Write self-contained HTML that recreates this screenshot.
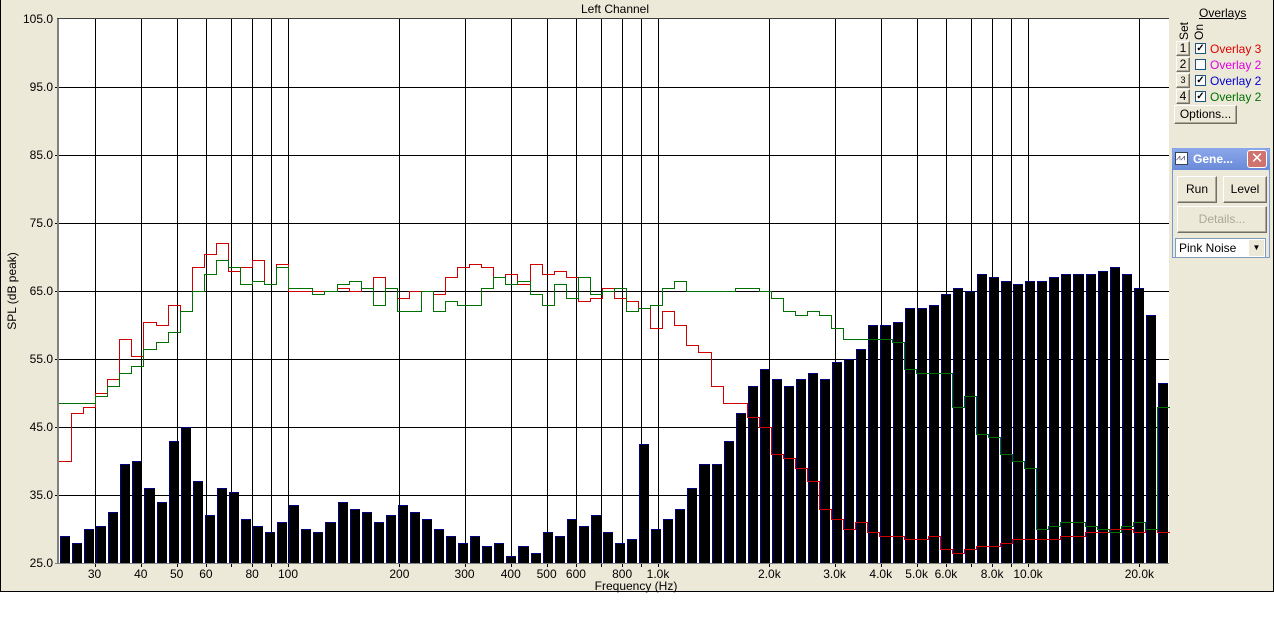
<!DOCTYPE html>
<html><head><meta charset="utf-8"><style>
body{margin:0;width:1274px;height:637px;background:#fff;overflow:hidden;font-family:"Liberation Sans",sans-serif;font-size:12px;position:relative}
#win{position:absolute;left:0;top:0;width:1272px;height:591px;background:#ece9d8;border-right:1px solid #000;border-bottom:1px solid #000;border-left:1px solid #000}
.a{position:absolute;white-space:nowrap}
.btn{position:absolute;background:#ece9d8;border:1px solid;border-color:#fff #716f64 #716f64 #fff;box-shadow:inset -1px -1px 0 #aca899;text-align:center;box-sizing:border-box}
.cb{position:absolute;width:11px;height:11px;background:#fff;border:1px solid #1c5180;box-sizing:border-box;font-size:10px;line-height:9px;text-align:center;font-weight:bold}
</style></head><body>
<div id="win"></div>
<svg id="s" width="1274" height="637" style="position:absolute;left:0;top:0" font-family="Liberation Sans, sans-serif" font-size="12"></svg>
<div class="a" style="left:1199px;top:6px;text-decoration:underline">Overlays</div>
<div class="a" style="left:1177px;top:40px;transform:rotate(-90deg);transform-origin:0 0">Set</div>
<div class="a" style="left:1192px;top:40px;transform:rotate(-90deg);transform-origin:0 0">On</div>
<div class="btn" style="left:1176px;top:41px;width:14px;height:15px;line-height:13px">1</div>
<div class="btn" style="left:1176px;top:57px;width:14px;height:15px;line-height:13px">2</div>
<div class="btn" style="left:1176px;top:73px;width:14px;height:15px;line-height:13px;font-size:9px">3</div>
<div class="btn" style="left:1176px;top:89px;width:14px;height:15px;line-height:13px">4</div>
<div class="cb" style="left:1195px;top:43px">✓</div>
<div class="cb" style="left:1195px;top:59px"></div>
<div class="cb" style="left:1195px;top:75px">✓</div>
<div class="cb" style="left:1195px;top:91px">✓</div>
<div class="a" style="left:1210px;top:42px;color:#e00000">Overlay 3</div>
<div class="a" style="left:1210px;top:58px;color:#e000e0">Overlay 2</div>
<div class="a" style="left:1210px;top:74px;color:#0000d0">Overlay 2</div>
<div class="a" style="left:1210px;top:90px;color:#007000">Overlay 2</div>
<div class="btn" style="left:1174px;top:105px;width:63px;height:19px;line-height:17px">Options...</div>
<div style="position:absolute;left:1172px;top:148px;width:98px;height:110px;background:#ece9d8;border:1px solid #7a96df;box-sizing:border-box"></div>
<div style="position:absolute;left:1172px;top:148px;width:98px;height:22px;background:linear-gradient(#8ca8ec,#6a8ad8);border-radius:5px 5px 0 0"></div>
<div style="position:absolute;left:1175px;top:152px;width:13px;height:13px;background:#fff;border:1px solid #345;box-sizing:border-box;font-size:8px;line-height:10px;color:#225">⩘⩘</div>
<div class="a" style="left:1193px;top:152px;color:#fff;font-weight:bold;font-size:12px">Gene...</div>
<div style="position:absolute;left:1247px;top:150px;width:20px;height:18px;background:#d0726e;border:1px solid #fff;box-sizing:border-box;color:#fff;font-size:15px;line-height:15px;text-align:center;border-radius:3px">✕</div>
<div class="btn" style="left:1177px;top:176px;width:40px;height:27px;line-height:25px;font-size:12px">Run</div>
<div class="btn" style="left:1223px;top:176px;width:44px;height:27px;line-height:25px;font-size:12px">Level</div>
<div class="btn" style="left:1177px;top:206px;width:90px;height:27px;line-height:25px;font-size:12px;color:#aca899">Details...</div>
<div style="position:absolute;left:1175px;top:238px;width:91px;height:20px;background:#fff;border:1px solid #7f9db9;box-sizing:border-box;font-size:12px;line-height:18px;padding-left:3px">Pink Noise<span style="position:absolute;right:1px;top:1px;width:15px;height:16px;background:#ece9d8;font-size:8px;line-height:16px;text-align:center">▼</span></div>
<script>
var s=document.getElementById('s'),h='';
function Y(d){return 19+(105-d)*6.8}
function X(f){return 288+370*Math.log10(f/100)}
h+='<rect x="59" y="19" width="1110" height="544" fill="#fff"/>';
h+='<text x="615" y="13" text-anchor="middle">Left Channel</text>';
var bars=[29,28,30,30.5,32.5,39.5,40,36,34,43,45,37,32,36,35.5,31.5,30.5,29.5,31,33.5,30,29.5,31,34,33,32.5,31,32,33.5,32.5,31.5,30,29,28,29,27.5,28,26,27.5,26.5,29.5,29,31.5,30.5,32,29.5,28,28.5,42.5,30,31.5,33,36,39.5,39.5,43,47,51,53.5,52,51,52,53,52,54.5,55,56.5,60,60,60.5,62.5,62.5,63,64.5,65.5,65,67.5,67,66.5,66,66.5,66.5,67,67.5,67.5,67.5,68,68.5,67.5,65.5,61.5,51.5];
var bw=1110/bars.length;
var fs=[30,40,50,60,70,80,90,100,200,300,400,500,600,700,800,900,1000,2000,3000,4000,5000,6000,7000,8000,9000,10000,20000];
fs.forEach(function(f){var x=Math.round(X(f));h+='<rect x="'+x+'" y="19" width="1" height="548" fill="#000"/>';});
for(var d=35;d<=95;d+=10){var y=Math.round(Y(d));h+='<rect x="55" y="'+y+'" width="1114" height="1" fill="#000"/>';}
bars.forEach(function(v,i){var x=Math.round(59+i*bw)+1,x2=Math.round(59+(i+1)*bw)-1,y=Math.round(Y(v));h+='<rect x="'+x+'" y="'+y+'" width="'+(x2-x)+'" height="'+(563-y)+'" fill="#000080"/><rect x="'+(x+1)+'" y="'+(y+1)+'" width="'+(x2-x-1)+'" height="'+(562-y)+'" fill="#000"/>';});
function step(a,col){var w=1110/a.length,py=Math.round(Y(a[0])),px=59;a.forEach(function(v,i){var y=Math.round(Y(v)),x2=Math.round(59+(i+1)*w);var t=Math.min(py,y),b=Math.max(py,y);h+='<rect x="'+px+'" y="'+t+'" width="1" height="'+(b-t+1)+'" fill="'+col+'"/>';h+='<rect x="'+px+'" y="'+y+'" width="'+(x2-px+1)+'" height="1" fill="'+col+'"/>';px=x2;py=y;});}
step([40,47,48,50,52,58,55.5,60.5,60,63,62,68.5,70.5,72,68,68.5,69.5,66,69,65,65,65,65,65.5,65,65.5,67,65.5,64,65,65,64.5,67,68.5,69,68.5,67,67.5,66,69,67.5,68,67,63.5,64,65.5,64,63.5,62.5,59.5,62,60,57,56,51,48.5,48.5,46.5,45,41,40.5,39,37,33,31.5,30,31,29.5,29,29,28.5,28.5,29,27,26.5,27,27.5,27.5,28,28.5,28.5,28.5,28.5,29,29,29.5,29.5,30,30,29.5,30,29.5],'#d00000');
step([48.5,48.5,48.5,49.5,51,53,54,56.5,57.5,59,62,65,67.5,69.5,68.5,66,66.5,66,68.5,65.5,65.5,64.5,65,66,66.5,65.5,63,65.5,62,62,65,62,63.5,63,63,65.5,67,66,66.5,64.5,63,66,64,67,64.5,65,65.5,62,62.5,63,65.5,66.5,65,65,65,65,65.5,65.5,65,64,62,61.5,62,61.5,59.5,58,58,58,58,57.5,53.5,53,53,53,48,49.5,44,43.5,41,40,39,30,30.5,31,31,30.5,30,29.5,30.5,31,30,48],'#007000');
h+='<rect x="57" y="18" width="2" height="546" fill="#808080"/><rect x="55" y="563" width="1114" height="1" fill="#808080"/><rect x="57" y="18" width="1112" height="1" fill="#404040"/>';
for(var d=25;d<=105;d+=10){h+='<text x="53" y="'+(Y(d)+4)+'" text-anchor="end">'+d+'.0</text>';}
[[30,'30'],[40,'40'],[50,'50'],[60,'60'],[80,'80'],[100,'100'],[200,'200'],[300,'300'],[400,'400'],[500,'500'],[600,'600'],[800,'800'],[1000,'1.0k'],[2000,'2.0k'],[3000,'3.0k'],[4000,'4.0k'],[5000,'5.0k'],[6000,'6.0k'],[8000,'8.0k'],[10000,'10.0k'],[20000,'20.0k']].forEach(function(t){h+='<text x="'+X(t[0])+'" y="578" text-anchor="middle">'+t[1]+'</text>';});
h+='<text x="636" y="590" text-anchor="middle">Frequency (Hz)</text>';
h+='<text transform="translate(16,291) rotate(-90)" text-anchor="middle">SPL (dB peak)</text>';
s.innerHTML=h;
</script>
</body></html>
